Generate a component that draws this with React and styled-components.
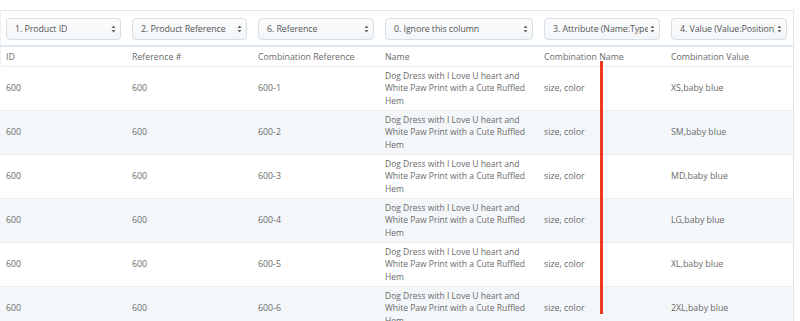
import React from "react";
import styled, { createGlobalStyle } from "styled-components";

const GlobalStyle = createGlobalStyle`
  html, body {
    margin: 0;
    padding: 0;
    background: #fff;
  }
  body {
    font-family: "Open Sans", "Liberation Sans", sans-serif;
  }
`;

const columns = [
  { pick: "1. Product ID", title: "ID", width: 126 },
  { pick: "2. Product Reference", title: "Reference #", width: 126 },
  { pick: "6. Reference", title: "Combination Reference", width: 127 },
  { pick: "0. Ignore this column", title: "Name", width: 159 },
  { pick: "3. Attribute (Name:Type", title: "Combination Name", width: 127 },
  { pick: "4. Value (Value:Position)", title: "Combination Value", width: 128 },
];

const sizes = ["XS", "SM", "MD", "LG", "XL", "2XL"];

const rows = sizes.map((s, i) => ({
  id: "600",
  ref: "600",
  comb: `600-${i + 1}`,
  name: "Dog Dress with I Love U heart and White Paw Print with a Cute Ruffled Hem",
  attr: "size, color",
  value: `${s},baby blue`,
}));

function Arrows() {
  return (
    <svg width="5" height="8" viewBox="0 0 5 8">
      <path d="M2.5 0.5 L4.5 3 L0.5 3 Z" fill="#666" />
      <path d="M2.5 7.5 L4.5 5 L0.5 5 Z" fill="#666" />
    </svg>
  );
}

export default function App() {
  return (
    <>
      <GlobalStyle />
      <Page>
        <Panel>
          <Table>
            <colgroup>
              {columns.map((c) => (
                <col key={c.title} style={{ width: c.width }} />
              ))}
            </colgroup>
            <thead>
              <PickRow>
                {columns.map((c, i) => (
                  <PickCell key={c.title} $last={i === columns.length - 1}>
                    <Select>
                      <SelectText>{c.pick}</SelectText>
                      <Arrows />
                    </Select>
                  </PickCell>
                ))}
              </PickRow>
              <TitleRow>
                {columns.map((c) => (
                  <TitleCell key={c.title}>{c.title}</TitleCell>
                ))}
              </TitleRow>
            </thead>
            <tbody>
              {rows.map((r, i) => (
                <DataRow key={r.comb} $striped={i % 2 === 1}>
                  <Cell>{r.id}</Cell>
                  <Cell>{r.ref}</Cell>
                  <Cell>{r.comb}</Cell>
                  <Cell $small>{r.name}</Cell>
                  <Cell>{r.attr}</Cell>
                  <Cell>{r.value}</Cell>
                </DataRow>
              ))}
            </tbody>
          </Table>
          <Marker />
        </Panel>
      </Page>
    </>
  );
}

const Page = styled.div`
  width: 800px;
  height: 321px;
  overflow: hidden;
  padding-top: 10px;
  box-sizing: border-box;
`;

const Panel = styled.div`
  position: relative;
  width: 794px;
  border-top: 1px solid #e4e7ea;
  border-right: 1px solid #e4e7ea;
  border-left: 1px solid #eef0f2;
  box-sizing: border-box;
`;

const Table = styled.table`
  width: 792px;
  margin-left: -1px;
  table-layout: fixed;
  border-collapse: collapse;
  font-size: 8.8px;
  color: #6a6a6a;
`;

const PickRow = styled.tr`
  border-bottom: 2px solid #dfe7ee;
`;

const PickCell = styled.th`
  padding: 7px ${(p) => (p.$last ? "6px" : "5px")} 5px 6px;
  font-weight: normal;
  text-align: left;
`;

const Select = styled.div`
  height: 22px;
  box-sizing: border-box;
  display: flex;
  align-items: center;
  justify-content: space-between;
  padding: 0 4px 0 8px;
  border: 1px solid #d7dee4;
  border-radius: 4px;
  background: linear-gradient(#fbfcfd, #f3f6f8);
  color: #555;
  font-size: 8.8px;
  letter-spacing: -0.05px;
`;

const SelectText = styled.span`
  white-space: nowrap;
  overflow: hidden;
  margin-right: 2px;
`;

const TitleRow = styled.tr`
  border-bottom: 1px solid #ececec;
`;

const TitleCell = styled.th`
  height: 19px;
  padding: 0 6px;
  font-weight: normal;
  text-align: left;
  white-space: nowrap;
`;

const DataRow = styled.tr`
  background: ${(p) => (p.$striped ? "#f4f7fa" : "#fff")};
  border-bottom: 1px solid #ececec;
`;

const Cell = styled.td`
  height: 43px;
  padding: 0 2px 0 6px;
  font-size: ${(p) => (p.$small ? "8.5px" : "8.8px")};
  line-height: 12.5px;
  vertical-align: middle;
`;

const Marker = styled.div`
  position: absolute;
  left: 599px;
  top: 50px;
  width: 3px;
  height: 253px;
  background: #f03a1f;
`;
